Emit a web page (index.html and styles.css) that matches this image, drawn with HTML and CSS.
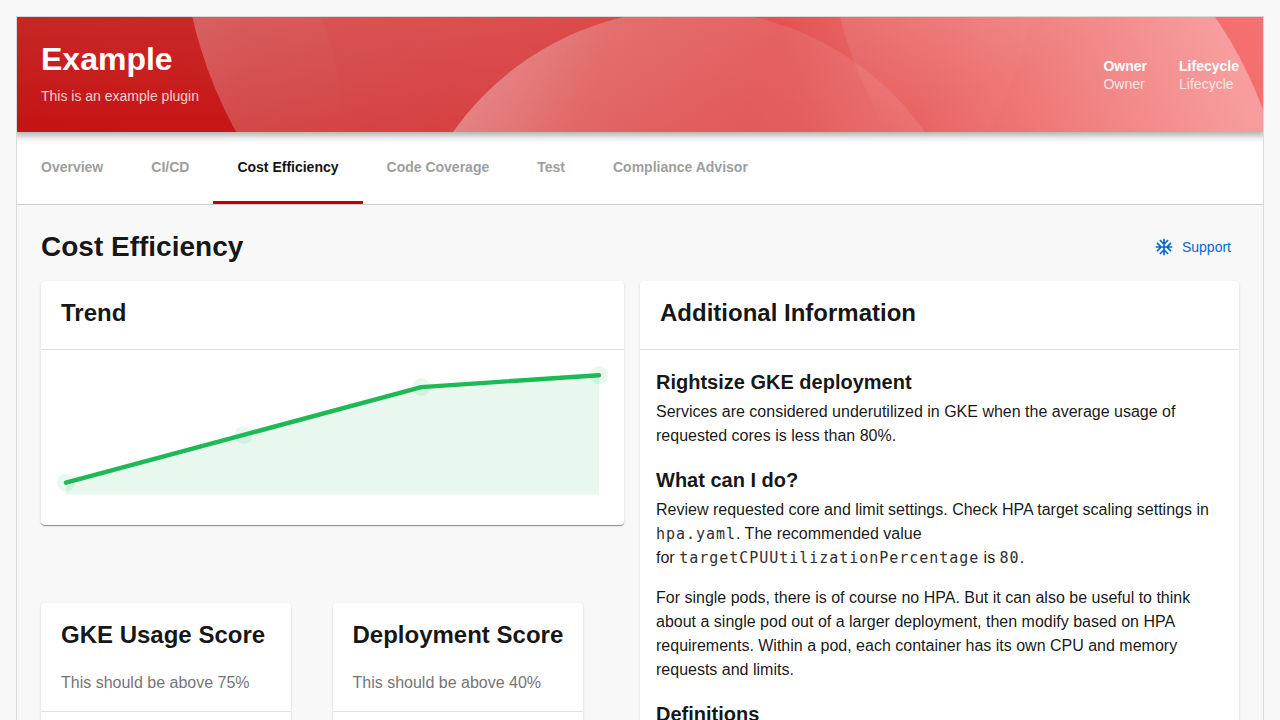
FILE: index.html
```html
<!DOCTYPE html>
<html lang="en">
<head>
<meta charset="utf-8">
<title>Example</title>
<link rel="stylesheet" href="styles.css">
</head>
<body>
<div class="page">
  <header class="header">
    <svg class="header-art" width="1246" height="115" viewBox="17 17 1246 115" preserveAspectRatio="none" aria-hidden="true">
      <defs>
        <linearGradient id="base" x1="0" x2="1" y1="0" y2="0"><stop offset="0" stop-color="#c41414"/><stop offset=".18" stop-color="#c71717"/><stop offset=".4" stop-color="#d63636"/><stop offset=".64" stop-color="#e24a4a"/><stop offset="1" stop-color="#f56b6b"/></linearGradient>
        <linearGradient id="top" x1="0" x2="0" y1="0" y2="1"><stop offset="0" stop-color="#fff" stop-opacity=".05"/><stop offset="1" stop-color="#fff" stop-opacity="0"/></linearGradient>
        <linearGradient id="a" gradientUnits="userSpaceOnUse" x1="190" y1="0" x2="560" y2="150"><stop offset="0" stop-color="#fff" stop-opacity=".27"/><stop offset=".5" stop-color="#fff" stop-opacity=".15"/><stop offset="1" stop-color="#fff" stop-opacity=".02"/></linearGradient>
        <linearGradient id="b" gradientUnits="userSpaceOnUse" x1="450" y1="60" x2="740" y2="150"><stop offset="0" stop-color="#fff" stop-opacity=".37"/><stop offset=".5" stop-color="#fff" stop-opacity=".2"/><stop offset="1" stop-color="#fff" stop-opacity=".09"/></linearGradient>
        <linearGradient id="c" gradientUnits="userSpaceOnUse" x1="0" y1="17" x2="0" y2="125"><stop offset="0" stop-color="#fff" stop-opacity=".06"/><stop offset="1" stop-color="#fff" stop-opacity="0"/></linearGradient>
        <linearGradient id="c2" gradientUnits="userSpaceOnUse" x1="850" y1="17" x2="900" y2="125"><stop offset="0" stop-color="#fff" stop-opacity=".1"/><stop offset="1" stop-color="#fff" stop-opacity="0"/></linearGradient>
        <linearGradient id="e" gradientUnits="userSpaceOnUse" x1="800" y1="130" x2="1230" y2="40"><stop offset="0" stop-color="#fff" stop-opacity="0"/><stop offset="1" stop-color="#fff" stop-opacity=".33"/></linearGradient>
      </defs>
      <rect x="17" y="17" width="1246" height="115" fill="url(#base)"/>
      <rect x="17" y="17" width="1246" height="115" fill="url(#top)"/>
      <circle cx="135" cy="105" r="205" fill="url(#c)" fill-opacity=".5"/>
      <circle cx="612" cy="-77" r="430" fill="url(#a)"/>
      <circle cx="689" cy="298.3" r="288.7" fill="url(#b)"/>
      <circle cx="1205" cy="-70" r="375" fill="url(#c2)"/>
      <circle cx="884" cy="247" r="403" fill="url(#e)"/>
    </svg>
    <div class="header-main">
      <h1 class="header-title">Example</h1>
      <p class="header-subtitle">This is an example plugin</p>
    </div>
    <dl class="header-labels">
      <div><dt>Owner</dt><dd>Owner</dd></div>
      <div><dt>Lifecycle</dt><dd>Lifecycle</dd></div>
    </dl>
  </header>
  <nav class="tabs">
    <a class="tab">Overview</a>
    <a class="tab">CI/CD</a>
    <a class="tab tab-active">Cost Efficiency</a>
    <a class="tab">Code Coverage</a>
    <a class="tab">Test</a>
    <a class="tab">Compliance Advisor</a>
  </nav>
  <main class="content">
    <div class="content-header">
      <h2 class="content-title">Cost Efficiency</h2>
      <a class="support">
        <svg width="20" height="20" viewBox="0 0 24 24" fill="currentColor" aria-hidden="true"><path d="M22 11h-4.17l3.24-3.24-1.41-1.42L15 11h-2V9l4.66-4.66-1.42-1.41L13 6.17V2h-2v4.17L7.76 2.93 6.34 4.34 11 9v2H9L4.34 6.34 2.93 7.76 6.17 11H2v2h4.17l-3.24 3.24 1.41 1.42L9 13h2v2l-4.66 4.66 1.42 1.41L11 17.83V22h2v-4.17l3.24 3.24 1.42-1.41L13 15v-2h2l4.66 4.66 1.41-1.42L17.83 13H22z"/></svg>
        <span>Support</span>
      </a>
    </div>
    <div class="columns">
      <div class="left">
        <section class="card trend">
          <h3 class="card-title">Trend</h3>
          <svg class="chart" width="583" height="175" viewBox="41 350 583 175">
            <path d="M66 482.7 243.7 434.9 421.3 387.1 599 375.2V494.5H66Z" fill="#1db954" fill-opacity=".1"/>
            <g fill="#1db954" fill-opacity=".1"><circle cx="66" cy="482.7" r="9"/><circle cx="243.7" cy="434.9" r="9"/><circle cx="421.3" cy="387.1" r="9"/><circle cx="599" cy="375.2" r="9"/></g>
            <path d="M66 482.7 243.7 434.9 421.3 387.1 599 375.2" fill="none" stroke="#1db954" stroke-width="4.4" stroke-linecap="round" stroke-linejoin="round"/>
          </svg>
        </section>
        <div class="scores">
          <section class="card score"><h3 class="card-title">GKE Usage Score</h3><p class="card-sub">This should be above 75%</p></section>
          <section class="card score"><h3 class="card-title">Deployment Score</h3><p class="card-sub">This should be above 40%</p></section>
        </div>
      </div>
      <section class="card info">
        <h3 class="card-title">Additional Information</h3>
        <div class="info-body">
          <h4>Rightsize GKE deployment</h4>
          <p>Services are considered underutilized in GKE when the average usage of requested cores is less than 80%.</p>
          <h4>What can I do?</h4>
          <p>Review requested core and limit settings. Check HPA target scaling settings in <code>hpa.yaml</code>. The recommended value for&nbsp;<code>targetCPUUtilizationPercentage</code>&nbsp;is&nbsp;<code>80</code>.</p>
          <p>For single pods, there is of course no HPA. But it can also be useful to think about a single pod out of a larger deployment, then modify based on HPA requirements. Within a pod, each container has its own CPU and memory requests and limits.</p>
          <h4>Definitions</h4>
        </div>
      </section>
    </div>
  </main>
</div>
</body>
</html>
```
FILE: styles.css
```css
* { box-sizing: border-box; }
html { height: 720px; overflow: hidden; }
body { margin: 0; padding: 16px 16px 0; height: 720px; overflow: hidden; background: #f8f8f8; color: rgba(0,0,0,.92); font-family: "Liberation Sans", Arial, sans-serif; font-size: 16px; line-height: 24px; }
h1, h2, h3, h4, p, dl, dd { margin: 0; }
.page { border: 1px solid #d9d9d9; border-bottom: 0; height: 704px; overflow: hidden; }
.header { position: relative; z-index: 2; display: flex; justify-content: space-between; align-items: center; height: 115px; padding: 24px; color: #fff; box-shadow: 0 0 8px 3px rgba(20,20,20,.4); clip-path: inset(0 0 -12px 0); }
.header-art { position: absolute; inset: 0; z-index: -1; }
.header-main { padding-bottom: 4px; }
.header-title { font-size: 32px; line-height: 38px; margin-bottom: 8px; }
.header-subtitle { font-size: 14px; line-height: 20px; color: rgba(255,255,255,.8); }
.header-labels { display: flex; gap: 32px; font-size: 14px; line-height: 18px; }
.header-labels dt { font-weight: 700; }
.header-labels dd { color: rgba(255,255,255,.8); }
.tabs { display: flex; height: 73px; background: #fff; border-bottom: 1px solid #d0d0d0; }
.tab { padding: 26px 24px 0; font-size: 14px; line-height: 18px; font-weight: 700; color: #9e9e9e; }
.tab-active { color: #141414; border-bottom: 3px solid #bf0000; }
.content { padding: 24px; }
.content-header { display: flex; justify-content: space-between; height: 52px; }
.content-title { font-size: 28px; line-height: 36px; }
.support { display: flex; align-items: center; gap: 8px; height: 36px; padding-right: 8px; color: #0568d2; font-size: 14px; }
.columns { display: grid; grid-template-columns: 583px 599px; gap: 16px; align-items: start; }
.card { background: #fff; border-radius: 4px; box-shadow: 0 2px 1px -1px rgba(0,0,0,.12), 0 1px 1px rgba(0,0,0,.08), 0 1px 3px rgba(0,0,0,.12); }
.card-title { height: 69px; padding: 16px 20px; font-size: 24px; line-height: 32px; border-bottom: 1px solid #e0e0e0; white-space: nowrap; }
.trend { height: 244px; box-shadow: 0 1px 0 rgba(0,0,0,.35), 0 1px 3px rgba(0,0,0,.14); }
.chart { display: block; }
.scores { display: flex; gap: 41.5px; padding-top: 78px; }
.score { width: 250px; height: 300px; }
.score .card-title { border: 0; height: 64px; }
.card-sub { height: 45px; padding: 4px 20px 0; color: #757575; border-bottom: 1px solid #e0e0e0; }
.info { height: 600px; }
.info-body { padding: 16px; }
.info-body h4 { font-size: 20px; line-height: 32px; margin-bottom: 2px; }
.info-body p { margin-bottom: 16px; }
.info-body code { font-family: "DejaVu Sans Mono", monospace; font-size: 15px; line-height: 1; letter-spacing: .97px; color: #303030; }
```
